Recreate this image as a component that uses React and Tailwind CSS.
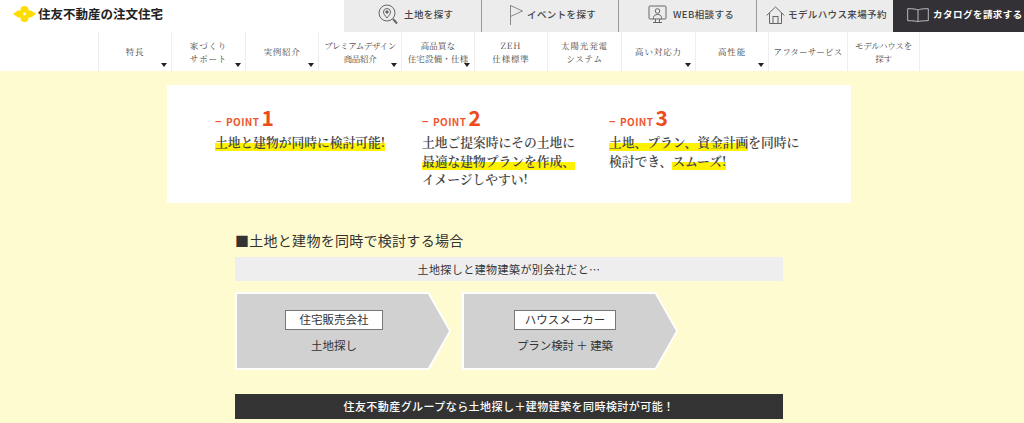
import React from 'react';

const tabs = [
  { label: '土地を探す', icon: 'pin', width: 'w-[137px]', inset: 'pl-[34px] gap-[6px]' },
  { label: 'イベントを探す', icon: 'flag', width: 'w-[137px]', inset: 'pl-[27px] gap-[3px]' },
  { label: 'WEB相談する', icon: 'web', width: 'w-[138px]', inset: 'pl-[29px] gap-[6px]' },
  { label: 'モデルハウス来場予約', icon: 'house', width: 'w-[137px]', inset: 'pl-[9px] gap-[3px]' },
];

const navItems = [
  { lines: ['特長'], width: 'w-[73px]', arrow: true, tracking: 'tracking-[0.1em]' },
  { lines: ['家づくり', 'サポート'], width: 'w-[74px]', arrow: true, tracking: 'tracking-[0.1em]' },
  { lines: ['実例紹介'], width: 'w-[73px]', arrow: true, tracking: 'tracking-[0.08em]' },
  { lines: ['プレミアムデザイン', '商品紹介'], width: 'w-[83px]', arrow: true, tracking: 'tracking-[-0.04em]' },
  { lines: ['高品質な', '住宅設備・仕様'], width: 'w-[73px]', arrow: true, tracking: 'tracking-[0.02em]' },
  { lines: ['ZEH', '仕様標準'], width: 'w-[73px]', tracking: 'tracking-[0.1em]' },
  { lines: ['太陽光発電', 'システム'], width: 'w-[74px]', tracking: 'tracking-[0.1em]' },
  { lines: ['高い対応力'], width: 'w-[74px]', arrow: true, tracking: 'tracking-[0.1em]' },
  { lines: ['高性能'], width: 'w-[73px]', arrow: true, tracking: 'tracking-[0.1em]' },
  { lines: ['アフターサービス'], width: 'w-[79px]', tracking: 'tracking-[0.02em]' },
  { lines: ['モデルハウスを', '探す'], width: 'w-[73px]', tracking: 'tracking-[-0.02em]' },
];

function TabIcon({ type }) {
  if (type === 'pin') {
    return (
      <svg width="20" height="22" viewBox="0 0 20 22" fill="none" stroke="#666" strokeWidth="1">
        <circle cx="9" cy="9" r="8" />
        <path d="M9 14c-2-2.500-3.500-4.200-3.500-6a3.500 3.500 0 0 1 7 0c0 1.800-1.500 3.500-3.500 6z" fill="#eee" />
        <circle cx="9" cy="8" r="1.200" fill="#555" />
        <path d="M15 15l4 4.500" strokeWidth="2" />
      </svg>
    );
  }
  if (type === 'flag') {
    return (
      <svg width="15" height="22" viewBox="0 0 15 22" fill="none" stroke="#888" strokeWidth="1">
        <path d="M1.500 1v20" />
        <path d="M1.500 1.500L13.500 7 1.500 12.500" />
      </svg>
    );
  }
  if (type === 'web') {
    return (
      <svg width="19" height="20" viewBox="0 0 19 20" fill="none" stroke="#666" strokeWidth="1">
        <rect x="1" y="1" width="17" height="13" rx="1" />
        <circle cx="9.500" cy="6" r="2.300" />
        <path d="M5.500 14v-1.500c0-2 1.800-3 4-3s4 1 4 3V14" />
        <path d="M7.500 14v3M11.500 14v3M5 17.500h9" />
      </svg>
    );
  }
  if (type === 'book') {
    return (
      <svg width="22" height="14" viewBox="0 0 22 14" fill="none" stroke="#bbb" strokeWidth="1">
        <path d="M11 2C9 1 6 .7.700.700v12c5.300 0 8.300.3 10.300 1 2-.7 5-1 10.300-1V.700C16 .7 13 1 11 2zM11 2v11.500" />
      </svg>
    );
  }
  return (
    <svg width="19" height="18" viewBox="0 0 19 18" fill="none" stroke="#666" strokeWidth="1">
      <path d="M.6 9.500L9.500 1l8.900 8.500" />
      <path d="M3.500 7v10.500h12V7" />
      <rect x="7" y="10.500" width="5" height="7" />
    </svg>
  );
}

function Logo() {
  return (
    <svg width="23" height="16" viewBox="0 0 23 16">
      <g fill="#ffdc00">
        <circle cx="11.500" cy="4" r="4" />
        <circle cx="11.500" cy="12" r="4" />
        <path d="M0 8l5-3.500h13L23 8l-5 3.500H5z" />
      </g>
      <circle cx="11.500" cy="8" r="1.400" fill="#fff" />
    </svg>
  );
}

function Mark({ children }) {
  return (
    <span className="bg-[linear-gradient(transparent_60%,#fff200_60%)]">{children}</span>
  );
}

function Point({ num, width, children }) {
  return (
    <div className={width}>
      <div className="flex items-baseline text-[#f0562a] font-bold h-[26px]">
        <span className="text-[11px] w-[11px]">−</span>
        <span className="text-[10px] tracking-[0.04em]">POINT</span>
        <span className="text-[21px] ml-[2px] leading-[26px] text-[#ee4b1c]">{num}</span>
      </div>
      <p className="text-[12.750px] leading-[18.500px] font-semibold text-[#444] mt-[3px] font-['Noto_Serif_CJK_JP','Liberation_Serif','Noto_Sans_CJK_JP',serif]">
        {children}
      </p>
    </div>
  );
}

function Chevron({ company, text, boxWidth, inset, tracking }) {
  return (
    <div className="w-[216px] h-[78px] bg-white p-[2px] [clip-path:polygon(0_0,194px_0,100%_50%,194px_100%,0_100%)]">
      <div className={`w-full h-full bg-[#d1d1d1] flex flex-col items-center pt-[16px] ${inset} [clip-path:polygon(0_0,191px_0,100%_50%,191px_100%,0_100%)]`}>
        <div className={`${boxWidth} h-[20px] shrink-0 bg-white border border-[#777] flex items-center justify-center text-[11.500px] text-[#333]`}>
          {company}
        </div>
        <div className={`mt-[6px] text-[11.500px] leading-[18px] text-[#333] ${tracking}`}>{text}</div>
      </div>
    </div>
  );
}

export default function App() {
  return (
    <div className="w-[1024px] h-[423px] overflow-hidden bg-[#fffbd0] font-['Noto_Sans_CJK_JP','Noto_Sans',sans-serif]">
      <header className="bg-white">
        <div className="flex h-[32px]">
          <div className="w-[344px] flex items-center pl-[13px] pb-[4px] gap-[2px]">
            <Logo />
            <span className="text-[12.500px] font-bold text-[#222]">住友不動産の注文住宅</span>
          </div>
          {tabs.map((tab, i) => (
            <div
              key={tab.label}
              className={`${tab.width} ${tab.inset} flex items-center pb-[3px] bg-[#ececec] text-[9.500px] font-medium tracking-[0.04em] text-[#444] whitespace-nowrap ${i > 0 ? 'border-l border-[#999]' : ''}`}
            >
              <TabIcon type={tab.icon} />
              <span>{tab.label}</span>
            </div>
          ))}
          <div className="flex-1 flex items-center pl-[14px] pb-[3px] gap-[4px] bg-[#333136] text-[9.500px] font-bold tracking-[0.05em] text-white whitespace-nowrap">
            <TabIcon type="book" />
            <span>カタログを請求する</span>
          </div>
        </div>
        <nav className="flex h-[39px] pl-[98px]">
          {navItems.map((item, i) => (
            <div
              key={item.lines[0]}
              className={`${item.width} ${item.tracking} relative flex flex-col items-center justify-center border-l border-[#eeeeee] text-[8.500px] leading-[12.500px] text-[#444] font-['Noto_Serif_CJK_JP','Liberation_Serif','Noto_Sans_CJK_JP',serif] ${i === navItems.length - 1 ? 'border-r' : ''}`}
            >
              {item.lines.map((line) => (
                <span key={line} className="whitespace-nowrap">{line}</span>
              ))}
              {item.arrow && (
                <span className="absolute right-[4px] bottom-[4px] border-x-[3px] border-t-[4px] border-x-transparent border-t-[#222]" />
              )}
            </div>
          ))}
        </nav>
      </header>

      <main className="pt-[14px]">
        <section className="ml-[167px] w-[684px] h-[118px] bg-white flex pl-[48px] pt-[19px]">
          <Point num="1" width="w-[207px]">
            <Mark>土地と建物が同時に検討可能!</Mark>
          </Point>
          <Point num="2" width="w-[187px]">
            土地ご提案時にその土地に
            <br />
            <Mark>最適な建物プランを作成、</Mark>
            <br />
            イメージしやすい!
          </Point>
          <Point num="3" width="w-[200px]">
            <Mark>土地、プラン、資金計画</Mark>を同時に
            <br />
            検討でき、<Mark>スムーズ!</Mark>
          </Point>
        </section>

        <section className="ml-[235px] w-[548px] mt-[27px]">
          <h2 className="text-[14px] leading-[20px] font-normal tracking-[0.02em] text-[#333]">■土地と建物を同時で検討する場合</h2>
          <div className="mt-[7px] h-[24px] bg-[#eeeeee] flex items-center justify-center text-[11px] tracking-[0.04em] text-[#333]">
            土地探しと建物建築が別会社だと…
          </div>
          <div className="mt-[11px] flex gap-[11px]">
            <Chevron company="住宅販売会社" text="土地探し" boxWidth="w-[98px]" inset="pr-[18px]" tracking="" />
            <Chevron company="ハウスメーカー" text="プラン検討 ＋ 建築" boxWidth="w-[102px]" inset="pr-[10px]" tracking="tracking-[-0.01em]" />
          </div>
          <div className="mt-[24px] h-[25px] bg-[#333333] flex items-center justify-center text-[11px] font-medium tracking-[0.04em] text-white">
            住友不動産グループなら土地探し＋建物建築を同時検討が可能！
          </div>
        </section>
      </main>
    </div>
  );
}
